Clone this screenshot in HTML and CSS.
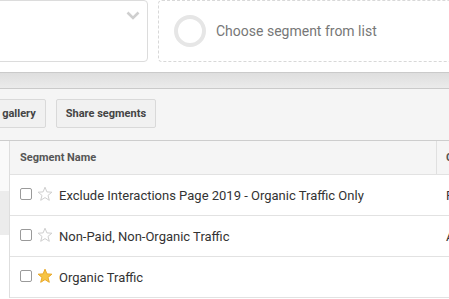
FILE: index.html
```html
<!DOCTYPE html>
<html>
<head>
<meta charset="utf-8">
<link rel="stylesheet" href="styles.css">
</head>
<body>
<div class="page">
  <div class="top">
    <div class="select-box">
      <svg class="chev" width="14" height="9" viewBox="0 0 14 9"><path d="M1.5 1.5 L7 7 L12.5 1.5" fill="none" stroke="#cfcfcf" stroke-width="2.6"/></svg>
    </div>
    <div class="drop-box">
      <span class="ring"></span>
      <span class="drop-text">Choose segment from list</span>
    </div>
  </div>
  <div class="band"></div>
  <div class="toolbar">
    <button class="btn btn-first">Import from gallery</button>
    <button class="btn">Share segments</button>
  </div>
  <div class="table-area">
    <div class="side">
      <div class="side-top"></div>
      <div class="side-sel"></div>
    </div>
    <div class="table">
      <div class="row head">
        <div class="c-name">Segment Name</div>
        <div class="c-date">Created</div>
      </div>
      <div class="row">
        <div class="c-name"><span class="cb"></span><svg class="star" width="16" height="16" viewBox="0 0 16 16"><path d="M8 1.2 L9.9 5.9 L14.9 6.2 L11 9.4 L12.3 14.3 L8 11.6 L3.7 14.3 L5 9.4 L1.1 6.2 L6.1 5.9 Z" fill="none" stroke="#cfcfcf" stroke-width="1"/></svg><span>Exclude Interactions Page 2019 - Organic Traffic Only</span></div>
        <div class="c-date">Feb 5, 2019</div>
      </div>
      <div class="row">
        <div class="c-name"><span class="cb"></span><svg class="star" width="16" height="16" viewBox="0 0 16 16"><path d="M8 1.2 L9.9 5.9 L14.9 6.2 L11 9.4 L12.3 14.3 L8 11.6 L3.7 14.3 L5 9.4 L1.1 6.2 L6.1 5.9 Z" fill="none" stroke="#cfcfcf" stroke-width="1"/></svg><span>Non-Paid, Non-Organic Traffic</span></div>
        <div class="c-date">Apr 4, 2016</div>
      </div>
      <div class="row">
        <div class="c-name"><span class="cb"></span><svg class="star" width="16" height="16" viewBox="0 0 16 16"><path d="M8 1.2 L9.9 5.9 L14.9 6.2 L11 9.4 L12.3 14.3 L8 11.6 L3.7 14.3 L5 9.4 L1.1 6.2 L6.1 5.9 Z" fill="#f7c443" stroke="#e9a827" stroke-width="1"/></svg><span>Organic Traffic</span></div>
        <div class="c-date"></div>
      </div>
    </div>
  </div>
</div>
</body>
</html>
```
FILE: styles.css
```css
html, body {
  margin: 0;
  padding: 0;
  background: #ffffff;
}
body {
  font-family: Roboto, "Liberation Sans", sans-serif;
  overflow: hidden;
  width: 449px;
  height: 299px;
}
.page {
  width: 449px;
  overflow: hidden;
}
.top {
  height: 72px;
  display: flex;
  gap: 10px;
  background: #fff;
}
.select-box {
  flex: none;
  box-sizing: border-box;
  width: 200px;
  height: 62px;
  margin-left: -52px;
  border: 1px solid #dcdcdc;
  border-radius: 4px;
  display: flex;
  justify-content: flex-end;
  align-items: flex-start;
  padding: 10px 7px 0 0;
}
.chev {
  display: block;
}
.drop-box {
  flex: none;
  box-sizing: border-box;
  width: 320px;
  height: 62px;
  border: 1px dashed #d8d8d8;
  border-radius: 4px;
  display: flex;
  align-items: center;
  padding-left: 15px;
  gap: 10px;
}
.ring {
  box-sizing: border-box;
  width: 32px;
  height: 32px;
  border: 4px solid #e6e6e6;
  border-radius: 50%;
  flex: none;
}
.drop-text {
  font-size: 14px;
  color: #777;
}
.band {
  height: 15px;
  border-top: 1px solid #cacaca;
  border-bottom: 1px solid #cacaca;
  background: linear-gradient(#dedede, #ebebeb);
}
.toolbar {
  box-sizing: border-box;
  height: 52px;
  background: #f5f5f5;
  border-bottom: 1px solid #cdcdcd;
  display: flex;
  gap: 10px;
  padding-top: 10px;
  align-items: flex-start;
}
.btn {
  font-family: Roboto, "Liberation Sans", sans-serif;
  font-weight: bold;
  font-size: 11px;
  color: #444;
  background: #f1f1f1;
  border: 1px solid #d9d9d9;
  border-radius: 2px;
  height: 29px;
  padding: 0 9px;
  flex: none;
}
.btn-first {
  margin-left: -70px;
}
.table-area {
  display: flex;
}
.side {
  width: 9px;
  flex: none;
  border-right: 1px solid #dedede;
}
.side-top {
  height: 50px;
  background: #fafafa;
}
.side-sel {
  height: 44px;
  background: #ececec;
}
.table {
  flex: none;
  width: 480px;
}
.row {
  display: flex;
  height: 40px;
  border-bottom: 1px solid #e2e2e2;
  align-items: center;
  font-size: 13px;
  color: #333;
}
.row.head {
  height: 33px;
  background: #f5f5f5;
  font-size: 11px;
  font-weight: bold;
  color: #555;
  align-items: stretch;
}
.c-name {
  width: 426px;
  box-sizing: border-box;
  padding-left: 10px;
  display: flex;
  align-items: center;
  flex: none;
}
.head .c-name {
  border-right: 1px solid #e0e0e0;
  width: 427px;
}
.c-date {
  padding-left: 10px;
  display: flex;
  align-items: center;
  white-space: nowrap;
}
.head .c-date {
  padding-left: 9px;
}
.cb {
  box-sizing: border-box;
  width: 12px;
  height: 12px;
  border: 1px solid #9a9a9a;
  border-radius: 2px;
  flex: none;
  margin-right: 5px;
  margin-top: -3px;
}
.star {
  flex: none;
  margin-right: 6px;
  margin-top: -3px;
}
```
